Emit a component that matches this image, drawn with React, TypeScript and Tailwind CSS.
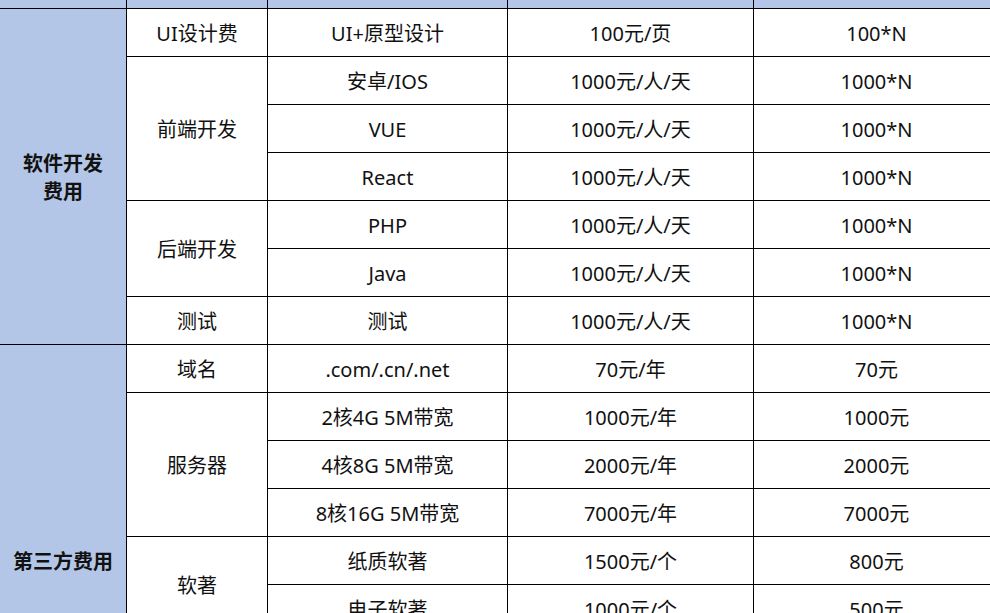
import React from "react";

const font = { fontFamily: '"Noto Sans", "Noto Sans CJK SC", sans-serif' };

type Row = { cat?: { text: React.ReactNode; span: number }; item?: { text: string; span: number }; name: string; price: string; total: string };

const rows: Row[] = [
  { cat: { text: <>软件开发<br />费用</>, span: 7 }, item: { text: "UI设计费", span: 1 }, name: "UI+原型设计", price: "100元/页", total: "100*N" },
  { item: { text: "前端开发", span: 3 }, name: "安卓/IOS", price: "1000元/人/天", total: "1000*N" },
  { name: "VUE", price: "1000元/人/天", total: "1000*N" },
  { name: "React", price: "1000元/人/天", total: "1000*N" },
  { item: { text: "后端开发", span: 2 }, name: "PHP", price: "1000元/人/天", total: "1000*N" },
  { name: "Java", price: "1000元/人/天", total: "1000*N" },
  { item: { text: "测试", span: 1 }, name: "测试", price: "1000元/人/天", total: "1000*N" },
  { cat: { text: "第三方费用", span: 9 }, item: { text: "域名", span: 1 }, name: ".com/.cn/.net", price: "70元/年", total: "70元" },
  { item: { text: "服务器", span: 3 }, name: "2核4G 5M带宽", price: "1000元/年", total: "1000元" },
  { name: "4核8G 5M带宽", price: "2000元/年", total: "2000元" },
  { name: "8核16G 5M带宽", price: "7000元/年", total: "7000元" },
  { item: { text: "软著", span: 2 }, name: "纸质软著", price: "1500元/个", total: "800元" },
  { name: "电子软著", price: "1000元/个", total: "500元" },
  { item: { text: "SSL证书", span: 1 }, name: "DV证书", price: "1000元/年", total: "1000元" },
  { item: { text: "短信", span: 1 }, name: "短信服务", price: "0.05元/条", total: "按量" },
  { item: { text: "存储", span: 1 }, name: "OSS存储", price: "500元/年", total: "500元" },
];

const td = "border border-black text-center align-middle p-0 pt-[2px]";

export default function App() {
  return (
    <div className="w-[990px] h-[613px] overflow-hidden bg-white text-[20px] text-[#111]" style={font}>
      <table className="table-fixed border-collapse -mt-[40px] -ml-[1px] w-[1000px]">
        <colgroup>
          <col className="w-[127px]" />
          <col className="w-[141px]" />
          <col className="w-[240px]" />
          <col className="w-[246px]" />
          <col className="w-[246px]" />
        </colgroup>
        <thead>
          <tr className="h-[48px] bg-[#b4c6e7]">
            <th className={td}></th>
            <th className={td}></th>
            <th className={td}></th>
            <th className={td}></th>
            <th className={td}></th>
          </tr>
        </thead>
        <tbody>
          {rows.map((r, i) => (
            <tr key={i} className="h-[48px]">
              {r.cat && (
                <td rowSpan={r.cat.span} className={`${td} bg-[#b4c6e7] font-bold leading-[28px]`}>
                  {r.cat.text}
                </td>
              )}
              {r.item && (
                <td rowSpan={r.item.span} className={td}>
                  {r.item.text}
                </td>
              )}
              <td className={td}>{r.name}</td>
              <td className={td}>{r.price}</td>
              <td className={td}>{r.total}</td>
            </tr>
          ))}
        </tbody>
      </table>
    </div>
  );
}
